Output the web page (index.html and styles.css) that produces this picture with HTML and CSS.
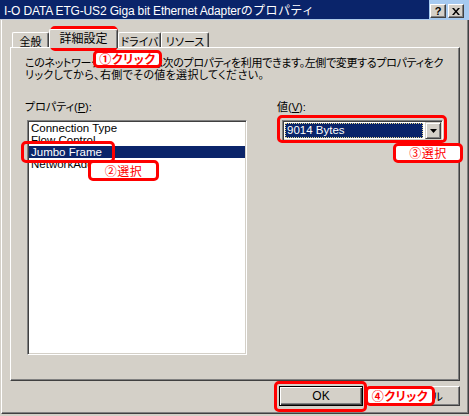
FILE: index.html
```html
<!DOCTYPE html>
<html lang="ja">
<head>
<meta charset="utf-8">
<link rel="stylesheet" href="styles.css">
</head>
<body>
<div class="window">
  <div class="titlebar">
    <span class="title">I-O DATA ETG-US2 Giga bit Ethernet Adapter<span class="title-ja">のプロパティ</span></span>
    <div class="caption-buttons">
      <span class="cap-btn cap-help">?</span>
      <span class="cap-btn cap-close"><svg width="8" height="7" viewBox="0 0 8 7"><path d="M0 0h2l2 2.4L6 0h2L5 3.5 8 7H6L4 4.6 2 7H0l3-3.5z" fill="#000"/></svg></span>
    </div>
  </div>
  <div class="frame">
    <div class="tabs">
      <div class="tab tab-general">全般</div>
      <div class="tab tab-active tab-advanced">詳細設定</div>
      <div class="tab tab-driver">ドライバ</div>
      <div class="tab tab-resource">リソース</div>
    </div>
    <div class="panel">
      <p class="desc"><span class="desc-line1">このネットワーク アダプタでは次のプロパティを利用できます。左側で変更するプロパティをク</span><br><span class="desc-line2">リックしてから、右側でその値を選択してください。</span></p>
      <div class="fields">
        <div class="field">
          <div class="label">プロパティ(<u>P</u>):</div>
          <ul class="listbox">
            <li>Connection Type</li>
            <li>Flow Control</li>
            <li class="selected">Jumbo Frame</li>
            <li>NetworkAddress</li>
          </ul>
        </div>
        <div class="field">
          <div class="label">値(<u>V</u>):</div>
          <div class="combo">
            <div class="combo-value"><span>9014 Bytes</span></div>
            <div class="combo-btn"><svg width="7" height="4" viewBox="0 0 7 4"><path d="M0 0h7L3.5 4z" fill="#000"/></svg></div>
          </div>
        </div>
      </div>
    </div>
    <div class="buttons">
      <div class="btn btn-default">OK</div>
      <div class="btn">キャンセル</div>
    </div>
  </div>

  <div class="mark mark-1"></div>
  <div class="tag tag-1">①クリック</div>
  <div class="mark mark-2"></div>
  <div class="tag tag-2">②選択</div>
  <div class="mark mark-3"></div>
  <div class="tag tag-3">③選択</div>
  <div class="mark mark-4"></div>
  <div class="tag tag-4">④クリック</div>
</div>
</body>
</html>
```
FILE: styles.css
```css
* { box-sizing: border-box; }
html, body { margin: 0; padding: 0; }
body {
  background: #d4d0c8;
  font-family: "Liberation Sans", "Noto Sans CJK JP", sans-serif;
  font-size: 12px;
  color: #000;
}
.window {
  position: relative;
  width: 469px;
  height: 416px;
}
/* title bar */
.titlebar {
  height: 20px;
  display: flex;
  justify-content: space-between;
  align-items: flex-start;
  background:
    linear-gradient(to right, #c6ccd6, #a6caf0) bottom / 100% 1px no-repeat,
    linear-gradient(to right, #0a246a 0, #0a246a 429px, #a6caf0 429px);
  color: #fff;
}
.title {
  padding-left: 4px;
  line-height: 19px;
  font-size: 12px;
  letter-spacing: -0.15px;
  white-space: nowrap;
}
.title-ja {
  font-family: "Noto Sans CJK JP", sans-serif;
  letter-spacing: 0.4px;
}
.caption-buttons {
  display: flex;
  gap: 2px;
  margin-top: 4px;
  margin-right: 5px;
}
.cap-btn {
  width: 16px;
  height: 14px;
  display: flex;
  align-items: center;
  justify-content: center;
  background: #d4d0c8;
  border: 1px solid;
  border-color: #fff #404040 #404040 #fff;
  box-shadow: inset -1px -1px #808080;
  color: #000;
  font-weight: bold;
  font-size: 11px;
  line-height: 1;
}
/* frame */
.frame {
  margin-left: 1px;
  width: 468px;
  height: 394px;
  border-left: 1px solid #fff;
  border-right: 1px solid #404040;
  border-bottom: 1px solid #404040;
  box-shadow: inset -1px -1px #808080;
  padding: 9px 0 7px 8px;
}
.tabs {
  display: flex;
  align-items: flex-end;
  height: 18px;
  padding-left: 2px;
  font-family: "Noto Sans CJK JP", sans-serif;
  font-feature-settings: "palt";
}
.tab {
  height: 15px;
  border-top: 1px solid #fff;
  border-left: 1px solid #fff;
  border-right: 1px solid #404040;
  box-shadow: inset -1px 0 #808080;
  border-radius: 2px 2px 0 0;
  display: flex;
  align-items: center;
  justify-content: center;
  font-size: 11px;
  line-height: 12px;
  padding-top: 1px;
  white-space: nowrap;
}
.tab-general { width: 37px; }
.tab-advanced { width: 69px; }
.tab-driver { width: 43px; }
.tab-resource { width: 48px; }
.tab-active {
  height: 19px;
  margin-bottom: -1px;
  position: relative;
  z-index: 1;
  background: #d4d0c8;
  padding-bottom: 3px;
  font-size: 12px;
}
.panel {
  width: 450px;
  height: 334px;
  border-top: 1px solid #fff;
  border-left: 1px solid #fff;
  border-right: 1px solid #404040;
  border-bottom: 1px solid #404040;
  box-shadow: inset -1px -1px #808080;
  padding: 9px 14px 0 14px;
}
.desc {
  margin: 0;
  font-size: 11px;
  line-height: 12px;
  white-space: nowrap;
  font-feature-settings: "palt";
}
.desc-line1 { letter-spacing: -0.33px; }
.desc-line2 { letter-spacing: 0.33px; }
.fields {
  display: grid;
  grid-template-columns: 222px 1fr;
  column-gap: 30px;
  margin-top: 20px;
}
.label {
  font-size: 11px;
  line-height: 12px;
  height: 12px;
  margin-bottom: 7px;
  font-feature-settings: "palt";
  white-space: nowrap;
}
.label u { text-underline-offset: 1px; }
.listbox {
  list-style: none;
  margin: 0 0 0 2px;
  width: 220px;
  height: 235px;
  background: #fff;
  border: 1px solid;
  border-color: #808080 #fff #fff #808080;
  box-shadow: inset 1px 1px #404040, inset -1px -1px #d4d0c8;
  padding: 1px 1px 0 1px;
}
.listbox li {
  height: 12px;
  line-height: 12px;
  font-size: 11.5px;
  padding-left: 2px;
  white-space: nowrap;
}
.listbox li.selected {
  background: #0a246a;
  color: #fff;
}
.combo {
  margin-left: 5px;
  width: 161px;
  height: 21px;
  display: flex;
  background: #fff;
  border: 1px solid;
  border-color: #808080 #fff #fff #808080;
  box-shadow: inset 1px 1px #404040, inset -1px -1px #d4d0c8;
  padding: 1px;
}
.combo-value {
  flex: 1;
  margin: 1px 2px 1px 1px;
  background: #0a246a;
  color: #fff;
  outline: 1px dotted #e8d890;
  outline-offset: -1px;
  font-size: 11.5px;
  line-height: 15px;
  padding-left: 2px;
  white-space: nowrap;
}
.combo-btn {
  width: 16px;
  height: 17px;
  display: flex;
  align-items: center;
  justify-content: center;
  background: #d4d0c8;
  border: 1px solid;
  border-color: #d4d0c8 #404040 #404040 #d4d0c8;
  box-shadow: inset 1px 1px #fff, inset -1px -1px #808080;
}
.buttons {
  width: 450px;
  margin-top: 5px;
  display: flex;
  justify-content: flex-end;
  gap: 13px;
}
.btn {
  width: 84px;
  height: 20px;
  display: flex;
  align-items: center;
  justify-content: center;
  background: #d4d0c8;
  border: 1px solid;
  border-color: #fff #404040 #404040 #fff;
  box-shadow: inset -1px -1px #808080;
  font-family: "Noto Sans CJK JP", sans-serif;
  font-size: 11px;
  font-feature-settings: "palt";
}
.btn-default {
  border: 1px solid #000;
  box-shadow: inset 1px 1px #fff, inset -1px -1px #404040, inset -2px -2px #808080;
  font-family: "Liberation Sans", sans-serif;
  font-size: 12px;
}
/* annotations */
.mark {
  position: absolute;
  border: 3px solid #f00;
  border-radius: 5px;
}
.tag {
  position: absolute;
  background: #fff;
  border: 3px solid #f00;
  border-radius: 5px;
  color: #f00;
  font-family: "Noto Sans CJK JP", sans-serif;
  font-weight: bold;
  font-size: 12px;
  line-height: 12px;
  display: flex;
  align-items: center;
  justify-content: center;
  font-feature-settings: "palt";
  letter-spacing: 0.5px;
  white-space: nowrap;
}
.mark-1 { left: 50px; top: 26px; width: 68px; height: 25px; }
.tag-1 { left: 93px; top: 50px; width: 69px; height: 18px; }
.mark-2 { left: 21px; top: 141px; width: 94px; height: 22px; }
.tag-2 { left: 88px; top: 160px; width: 71px; height: 21px; font-weight: normal; }
.mark-3 { left: 277px; top: 115px; width: 170px; height: 28px; }
.tag-3 { left: 393px; top: 143px; width: 70px; height: 20px; font-weight: normal; }
.mark-4 { left: 274px; top: 381px; width: 93px; height: 31px; }
.tag-4 { left: 365px; top: 386px; width: 70px; height: 20px; }
```
